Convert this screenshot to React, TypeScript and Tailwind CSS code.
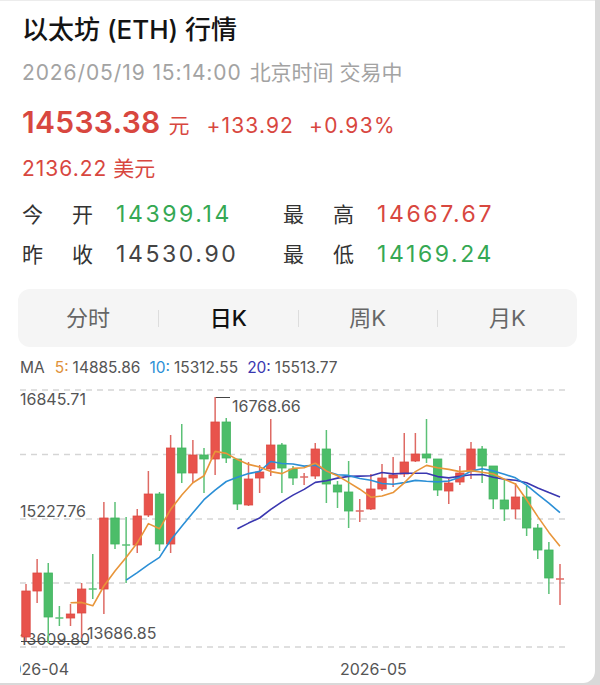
import React from 'react';

type C = [number, number, number, number, 'r' | 'g'];
const CANDLES: C[] = [
  [590, 636, 583, 640, 'r'],
  [572, 590, 558, 602, 'r'],
  [572, 616, 562, 642, 'g'],
  [616, 618, 605, 625, 'g'],
  [613, 617, 603, 625, 'r'],
  [588, 612, 582, 637, 'r'],
  [587, 589, 553, 598, 'g'],
  [517, 588, 501, 613, 'r'],
  [517, 543, 501, 548, 'g'],
  [543, 545, 516, 582, 'g'],
  [515, 544, 508, 552, 'r'],
  [493, 514, 470, 516, 'r'],
  [493, 543, 491, 550, 'g'],
  [447, 543, 434, 552, 'r'],
  [447, 472, 423, 482, 'g'],
  [454, 472, 439, 482, 'r'],
  [454, 458, 447, 492, 'g'],
  [421, 458, 396, 474, 'r'],
  [421, 457, 417, 462, 'g'],
  [458, 503, 458, 509, 'g'],
  [478, 504, 461, 505, 'r'],
  [471, 477, 464, 492, 'r'],
  [444, 468, 418, 475, 'r'],
  [444, 467, 442, 492, 'g'],
  [468, 477, 465, 484, 'g'],
  [475, 477, 472, 484, 'r'],
  [448, 475, 442, 478, 'r'],
  [448, 483, 429, 502, 'g'],
  [484, 491, 480, 507, 'g'],
  [491, 510, 460, 527, 'g'],
  [509, 511, 498, 521, 'r'],
  [488, 508, 473, 509, 'r'],
  [477, 488, 463, 490, 'r'],
  [474, 477, 456, 486, 'r'],
  [461, 473, 432, 476, 'r'],
  [453, 460, 432, 461, 'r'],
  [453, 457, 418, 462, 'g'],
  [458, 489, 458, 495, 'g'],
  [482, 490, 478, 503, 'r'],
  [472, 481, 465, 484, 'r'],
  [448, 470, 441, 478, 'r'],
  [448, 465, 445, 482, 'g'],
  [465, 498, 465, 508, 'g'],
  [499, 508, 478, 520, 'g'],
  [496, 508, 482, 518, 'r'],
  [496, 527, 485, 535, 'g'],
  [527, 549, 523, 558, 'g'],
  [549, 577, 541, 593, 'g'],
  [577, 579, 563, 604, 'r'],
];

const X0 = 26;
const DX = 11.125;
const cx = (i: number) => X0 + i * DX;
const closes = CANDLES.map((c) => (c[4] === 'r' ? c[0] : c[1]));

function maPoints(n: number) {
  const pts: string[] = [];
  for (let i = n - 1; i < closes.length; i++) {
    let s = 0;
    for (let j = i - n + 1; j <= i; j++) s += closes[j];
    pts.push(`${cx(i).toFixed(1)},${(s / n).toFixed(1)}`);
  }
  return pts.join(' ');
}

const GRID = [389, 453.5, 518, 582, 646];

function Chart() {
  return (
    <svg width={595} height={305} viewBox="0 378 595 305" className="block">
      <defs>
        <clipPath id="xclip">
          <rect x={20} y={640} width={560} height={40} />
        </clipPath>
      </defs>
      {GRID.map((y) => (
        <line key={y} x1={20} x2={570} y1={y} y2={y} stroke="#d5d5d5" strokeWidth={1.5} strokeDasharray="6 5" />
      ))}
      <g fontFamily="Inter, 'Noto Sans CJK SC', sans-serif" fontSize={16} fill="#555">
        <text x={20} y={398} dominantBaseline="central">16845.71</text>
        <text x={20} y={510} dominantBaseline="central">15227.76</text>
        <text x={20} y={638} dominantBaseline="central">13609.80</text>
        <text x={87} y={632} dominantBaseline="central">13686.85</text>
        <text x={232} y={405} dominantBaseline="central">16768.66</text>
        <g clipPath="url(#xclip)">
          <text x={69} y={668} dominantBaseline="central" textAnchor="end">2026-04</text>
        </g>
        <text x={340} y={668} dominantBaseline="central">2026-05</text>
      </g>
      <line x1={215} x2={230} y1={396.5} y2={396.5} stroke="#444" strokeWidth={1} />
      <line x1={21} x2={88} y1={640.5} y2={640.5} stroke="#444" strokeWidth={1} />
      {CANDLES.map((c, i) => {
        const x = cx(i);
        const red = c[4] === 'r';
        const body = red ? '#e8534c' : '#4cbd69';
        const wick = red ? '#de6a64' : '#5cc177';
        const h = c[1] - c[0];
        return (
          <g key={i}>
            <line x1={x} x2={x} y1={c[2]} y2={c[3]} stroke={wick} strokeWidth={1.5} />
            {h < 3 ? (
              <line x1={x - 4} x2={x + 4} y1={(c[0] + c[1]) / 2} y2={(c[0] + c[1]) / 2} stroke={wick} strokeWidth={1.5} />
            ) : (
              <rect x={x - 4.2} y={c[0]} width={8.4} height={h} fill={body} stroke={red ? '#dc4a43' : '#42b45f'} strokeWidth={0.8} />
            )}
          </g>
        );
      })}
      <polyline points={maPoints(20)} fill="none" stroke="#3a37b0" strokeWidth={1.6} strokeLinejoin="round" />
      <polyline points={maPoints(10)} fill="none" stroke="#2b8fd6" strokeWidth={1.6} strokeLinejoin="round" />
      <polyline points={maPoints(5)} fill="none" stroke="#e8953a" strokeWidth={1.6} strokeLinejoin="round" />
    </svg>
  );
}

export default function App() {
  return (
    <div className="w-[600px] h-[685px] bg-[#d9d9d9] font-[Inter,'Noto_Sans_CJK_SC',sans-serif] overflow-hidden">
      <div className="relative w-[595px] h-[683px] bg-white rounded-br-[12px] border-t border-[#ececec]">
        <div className="h-[58px] pl-[22px] flex items-center text-[26px] leading-none font-medium text-[#141414]">
          以太坊 (ETH) 行情
        </div>
        <div className="h-[26px] pl-[22px] flex items-center text-[21px] leading-none text-[#a3a3a3]">
          <span className="tracking-[0.9px]">2026/05/19 15:14:00</span>
          <span className="ml-[8px]">北京时间 交易中</span>
        </div>
        <div className="h-[74px] pl-[22px] flex items-center">
          <div className="flex items-baseline text-[#d8473f]">
            <span className="text-[30px] leading-none font-semibold tracking-[0.3px]">14533.38</span>
            <span className="ml-[8px] text-[21px] leading-none">元</span>
            <span className="ml-[17px] text-[21px] leading-none tracking-[1.1px]">+133.92</span>
            <span className="ml-[15px] text-[21px] leading-none tracking-[1.3px]">+0.93%</span>
          </div>
        </div>
        <div className="h-[18px] pl-[22px] flex items-center text-[21px] leading-none text-[#d8473f]">
          <span className="tracking-[1px]">2136.22</span>
          <span className="ml-[6px]">美元</span>
        </div>
        <div className="h-[17px]" />
        {[
          ['今', '开', '14399.14', 'text-[#35a853]', '最', '高', '14667.67', 'text-[#d8473f]'],
          ['昨', '收', '14530.90', 'text-[#444444]', '最', '低', '14169.24', 'text-[#35a853]'],
        ].map((r, i) => (
          <div key={i} className="h-[40px] pl-[22px] flex items-center text-[21px] leading-none">
            <span className="w-[50px] text-[#333]">{r[0]}</span>
            <span className="w-[44px] text-[#333]">{r[1]}</span>
            <span className={`w-[167px] text-[23px] tracking-[2.6px] ${r[3]}`}>{r[2]}</span>
            <span className="w-[50px] text-[#333]">{r[4]}</span>
            <span className="w-[44px] text-[#333]">{r[5]}</span>
            <span className={`text-[23px] tracking-[2.6px] ${r[7]}`}>{r[6]}</span>
          </div>
        ))}
        <div className="mt-[15px] ml-[18px] w-[559px] h-[58px] rounded-[12px] bg-[#f5f5f5] flex items-center text-[22px] leading-none">
          <div className="w-[140px] flex justify-center text-[#666]">分时</div>
          <div className="w-px h-[17px] bg-[#dddddd]" />
          <div className="flex-1 flex justify-center text-[#111] font-medium">日K</div>
          <div className="w-px h-[17px] bg-[#dddddd]" />
          <div className="flex-1 flex justify-center text-[#666]">周K</div>
          <div className="w-px h-[17px] bg-[#dddddd]" />
          <div className="w-[139px] flex justify-center text-[#666]">月K</div>
        </div>
        <div className="mt-[10px] h-[22px] pl-[20px] flex items-center text-[15.5px] leading-none text-[#555]">
          <span>MA</span>
          <span className="ml-[10px] text-[#e0913a]">5:</span>
          <span className="ml-[4px]">14885.86</span>
          <span className="ml-[9px] text-[#2b8fd6]">10:</span>
          <span className="ml-[4px]">15312.55</span>
          <span className="ml-[9px] text-[#3a37b0]">20:</span>
          <span className="ml-[4px]">15513.77</span>
        </div>
        <Chart />
      </div>
    </div>
  );
}
